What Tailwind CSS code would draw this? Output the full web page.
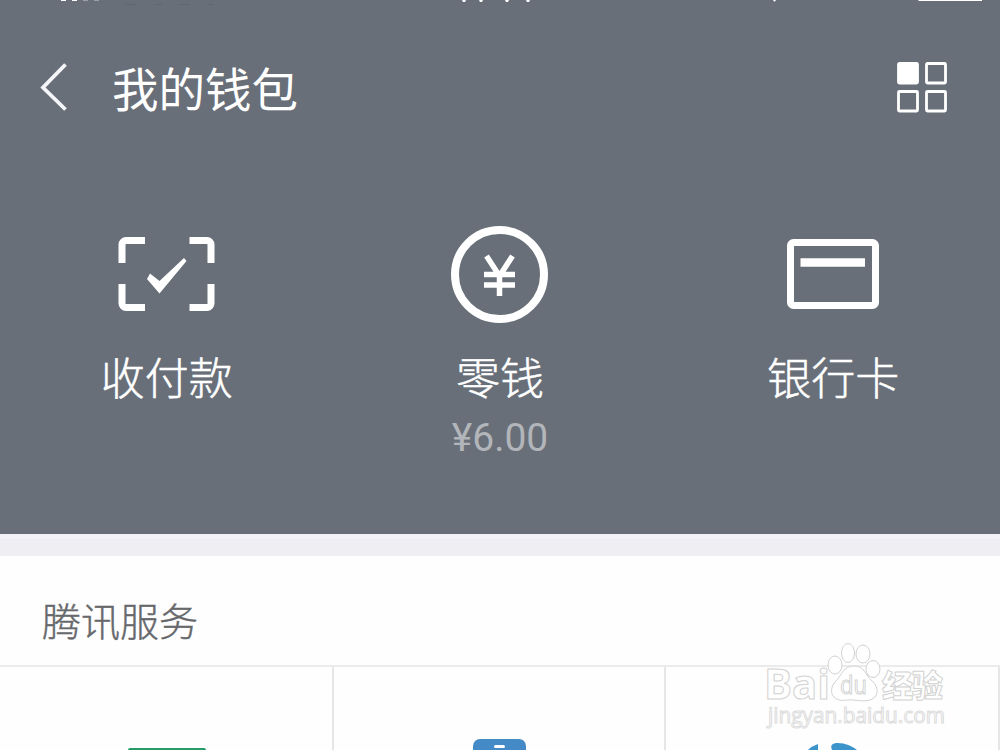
<!DOCTYPE html>
<html lang="zh-CN">
<head>
    <meta charset="UTF-8">
    <meta name="viewport" content="width=device-width, initial-scale=1.0">
    <title>我的钱包</title>
    <script src="https://cdn.jsdelivr.net/npm/@tailwindcss/browser@4"></script>
</head>
<body class="relative w-[1000px] h-[750px] overflow-hidden bg-[#fefefe] font-['Noto_Sans_CJK_SC',sans-serif]">
    <!-- Wallet header -->
    <header class="h-[534px] bg-[#686f79] text-white">
        <!-- Bottom edge of the status bar -->
        <svg class="block" width="1000" height="6" viewBox="0 0 1000 6" fill="#fff">
            <path d="M61 0h5v1h-5zM72 0h5v1h-5zM462 0h4l-1 2h-2zM479 0h4l-1 2h-2zM505 0h4l-1 2h-2zM526 0h4l-1 2h-2zM773 0h3l-1 1.500h-1zM918 0h64v1h-63z"/>
            <path d="M83 0h5v1h-5zM94 0h5v1h-5z" fill="#9ba0a7"/>
            <path d="M125 4h12v1h-12zM156 4h6v1h-6zM180 4h10v1h-10zM208 4h6v1h-6z" fill="#5f666f"/>
        </svg>
        <!-- Title row -->
        <div class="flex h-[162px] items-center pl-10 pr-[52px]">
            <svg width="28" height="48" viewBox="0 0 28 48" fill="none" stroke="#f4f6fa" stroke-width="3.8">
                <path d="M25.500 1.500L3 24.500l22.500 22"/>
            </svg>
            <h1 class="ml-[44px] -mt-px text-[46.500px] leading-[60px]">我的钱包</h1>
            <svg class="ml-auto" width="51" height="51" viewBox="0 0 51 51" fill="none" stroke="#fff" stroke-width="2.800">
                <rect x="1.500" y="1.500" width="19" height="19.500" rx="1" fill="#fff"/>
                <rect x="29.500" y="1.500" width="19" height="19.500" rx="1"/>
                <rect x="1.500" y="29.500" width="19" height="19.500" rx="1"/>
                <rect x="29.500" y="29.500" width="19" height="19.500" rx="1"/>
            </svg>
        </div>
        <!-- Main actions -->
        <div class="grid grid-cols-3 pt-14">
            <div class="flex flex-col items-center">
                <svg width="100" height="100" viewBox="0 0 100 100" fill="none" stroke="#fff">
                    <path stroke-width="7" d="M28 16.500H9a4 4 0 0 0-4 4V39M72.500 16.500H90a4 4 0 0 1 4 4V39M5 60v19.500a4 4 0 0 0 4 4H28M94 60v19.500a4 4 0 0 1-4 4H72.500"/>
                    <path fill="#fff" stroke="none" d="M30 55l3-5.500 9.500 7.500L67 34l2.500 3L42.500 69.500z" stroke-linejoin="round"/>
                </svg>
                <span class="mt-[18px] mb-[2px] text-[44px] font-light leading-[68px] [-webkit-text-stroke:0.5px_white]">收付款</span>
            </div>
            <div class="flex flex-col items-center">
                <svg width="100" height="100" viewBox="0 0 100 100" fill="none" stroke="#fff">
                    <circle cx="49.500" cy="50.500" r="44.500" stroke-width="8"/>
                    <path stroke-width="5.500" d="M36.500 32L49.500 52 62.500 32M34 50.500h31M34 61h31M49.500 51v21"/>
                </svg>
                <span class="mt-[18px] mb-[2px] text-[44px] font-light leading-[68px] [-webkit-text-stroke:0.5px_white]">零钱</span>
                <span class="mt-px text-[39px] leading-[50px] text-[#b2b5b9] font-['Roboto',sans-serif]">¥6.00</span>
            </div>
            <div class="flex flex-col items-center">
                <svg width="100" height="100" viewBox="0 0 100 100" fill="none" stroke="#fff" stroke-width="7">
                    <rect x="7.500" y="18.500" width="85" height="63" rx="3"/>
                    <path stroke-width="8.500" d="M17.500 38.500h64.500"/>
                </svg>
                <span class="mt-[18px] mb-[2px] text-[44px] font-light leading-[68px] [-webkit-text-stroke:0.5px_white]">银行卡</span>
            </div>
        </div>
    </header>
    <div class="h-[22px] border-t-[5px] border-[#f3f2f9] bg-[#efeef2]"></div>
    <!-- Tencent services -->
    <section>
        <h2 class="h-[109px] pl-[42px] pt-[33px] text-[39px] font-light leading-[60px] text-[#66686b] [-webkit-text-stroke:0.4px_#66686b]">腾讯服务</h2>
        <div class="grid h-[85px] grid-cols-[333px_333px_334px] border-t-2 border-[#ebebeb]">
            <div class="flex items-end justify-center">
                <div class="h-[2px] w-[78px] rounded-t-sm bg-[#259b6a]"></div>
            </div>
            <div class="-ml-px flex items-end justify-center border-x-2 border-[#e6e6e6]">
                <div class="flex h-[11px] w-[53px] justify-center rounded-t-[7px] bg-[#438ac6] pt-[6px]">
                    <div class="h-[3px] w-[11px] rounded-full bg-white"></div>
                </div>
            </div>
            <div class="flex items-end justify-center border-r-2 border-[#e6e6e6]">
                <svg width="54" height="8" viewBox="0 0 54 8" fill="#3b95cb">
                    <path d="M3 8q4-4 10-6v6zM27 8C25 3 27 1 33 1c7 0 14 3 19 7z"/>
                </svg>
            </div>
        </div>
    </section>
    <!-- Watermark -->
    <svg class="absolute left-[760px] top-[636px]" width="200" height="100" viewBox="0 0 200 100" fill="#fff" stroke="#d2d2d2" stroke-width="1">
        <g font-family="Open Sans, sans-serif" font-weight="700" stroke-linejoin="round">
            <text x="4" y="63" font-size="41" textLength="66" lengthAdjust="spacingAndGlyphs">Bai</text>
            <text x="122" y="61" font-size="31" font-weight="900" textLength="61" font-family="Noto Sans CJK SC, sans-serif">经验</text>
        </g>
        <ellipse cx="75" cy="29" rx="7" ry="9"/>
        <ellipse cx="88" cy="17" rx="6.500" ry="9.500"/>
        <ellipse cx="103" cy="18" rx="7" ry="9"/>
        <ellipse cx="113" cy="33" rx="7" ry="8.500"/>
        <path d="M94 30c-11 0-12 9-18 15-5 5-6 12-2 16 6 6 12 2 20 3 9 1 16 2 21-3 4-5 2-12-3-16-7-6-7-15-18-15z"/>
        <text x="80" y="58" font-size="25" font-family="Open Sans, sans-serif" textLength="27" lengthAdjust="spacingAndGlyphs">du</text>
        <text x="8" y="87" font-size="21" font-family="Open Sans, sans-serif" textLength="177" lengthAdjust="spacingAndGlyphs" stroke="#dcdcdc">jingyan.baidu.com</text>
    </svg>
</body>
</html>
